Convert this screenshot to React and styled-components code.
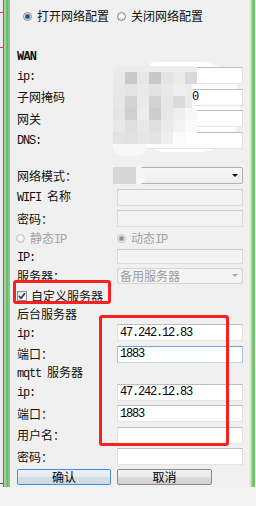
import React from "react";
import styled, { createGlobalStyle } from "styled-components";

const GlobalStyle = createGlobalStyle`
  html, body { margin: 0; padding: 0; }
  body {
    width: 256px;
    height: 506px;
    overflow: hidden;
    background: #f3f3f3;
    font-family: "Noto Sans CJK SC", "Liberation Sans", sans-serif;
    font-size: 12px;
    color: #111;
  }
  * { box-sizing: border-box; }
`;

const Page = styled.div`
  width: 256px;
  height: 506px;
  background: #f3f3f3;
`;

const Window = styled.div`
  position: relative;
  height: 487px;
  display: flex;
`;

const OuterStrip = styled.div`
  width: 4px;
  border-right: 1px solid #6e6e6e;
  background:
    linear-gradient(#e8322a, #e8322a) 0 12px / 3px 1px no-repeat,
    linear-gradient(#e8322a, #e8322a) 0 47px / 3px 1px no-repeat,
    linear-gradient(#5a5a5a, #5a5a5a) 0 483px / 3px 1px no-repeat,
    #ececec;
`;

const GreenBar = styled.div`
  width: ${(p) => p.$w}px;
  background: linear-gradient(to right, #b3dbac, #86cc7f 40%, #5fb559 75%, #9fd199);
`;

const Divider = styled.div`
  width: 1px;
  background: ${(p) => p.$c};
`;

const Panel = styled.div`
  flex: 1;
  background: #f0f0f0;
  padding: 7px 0 0 7px;
  display: flex;
  flex-direction: column;
`;

const Layer = styled.div`
  position: relative;
  z-index: 1;
`;

const Spacer = styled.div`
  height: ${(p) => p.$h}px;
`;

const FieldRow = styled(Layer)`
  height: ${(p) => p.$h ?? 21.5}px;
  display: grid;
  grid-template-columns: 100px 126px;
  align-items: center;
`;

const TopRadioRow = styled(Layer)`
  height: 18px;
  padding-left: 6px;
  display: grid;
  grid-template-columns: 94px auto;
  align-items: center;
`;

const TextRow = styled(Layer)`
  height: ${(p) => p.$h}px;
  display: flex;
  align-items: center;
  line-height: 14px;
  font-weight: ${(p) => (p.$bold ? 700 : 400)};
`;

const Label = styled.span`
  line-height: 14px;
  color: #111;
  white-space: nowrap;
`;

const Lat = styled.span`
  font-family: "Liberation Mono", monospace;
  letter-spacing: -1.2px;
  white-space: pre;
`;

const TitleLat = styled.span`
  font-family: "Liberation Mono", monospace;
  font-weight: 700;
  letter-spacing: -0.8px;
`;

const TextInput = styled.input`
  width: 126px;
  height: ${(p) => p.$h ?? 17}px;
  margin: 0;
  padding: 0 2px;
  border: 1px solid;
  border-color: ${(p) =>
    p.$focus
      ? "#6fa3d9 #a9caec #b9d6f3 #a9caec"
      : p.disabled
      ? "#cbcbcb #d9d9d9 #dddddd #d9d9d9"
      : "#bdbdbd #dedede #e5e5e5 #dedede"};
  background: ${(p) => (p.disabled ? "#f3f3f3" : "#fff")};
  font-family: "Liberation Mono", monospace;
  font-size: 12px;
  letter-spacing: -1.2px;
  color: #000;
  outline: none;
`;

const Combo = styled.div`
  width: 126px;
  height: ${(p) => p.$h}px;
  border: 1px solid ${(p) => (p.$disabled ? "#d5d5d5" : "#b2b2b2")};
  border-radius: 2px;
  background: ${(p) => (p.$disabled ? "#f4f4f4" : "linear-gradient(#f8f8f8, #eeeeee)")};
  display: flex;
  align-items: center;
  justify-content: space-between;
  padding: 0 4px 0 2px;
  color: ${(p) => (p.$disabled ? "#9d9d9d" : "#000")};
  line-height: 12px;
`;

const Caret = styled.span`
  width: 0;
  height: 0;
  border-left: 3px solid transparent;
  border-right: 3px solid transparent;
  border-top: 3px solid ${(p) => p.$c};
`;

const RadioItem = styled.span`
  display: flex;
  align-items: center;
  gap: ${(p) => p.$gap ?? 5}px;
  margin-left: ${(p) => p.$ml ?? 0}px;
  color: ${(p) => (p.$disabled ? "#a3a3a3" : "#111")};
  line-height: 14px;
  white-space: nowrap;
`;

const RadioDot = styled.span`
  width: 9px;
  height: 9px;
  flex: none;
  border-radius: 50%;
  border: 1px solid ${(p) => (p.$disabled ? "#c2c2c2" : "#8a8a8a")};
  background: ${(p) =>
    p.$checked
      ? `radial-gradient(circle at 50% 50%, ${p.$disabled ? "#8f8f8f" : "#21508f"} 0 1.5px, ${
          p.$disabled ? "#c4c4c4" : "#74a3d6"
        } 2.6px, #f6f6f6 3.2px)`
      : "radial-gradient(circle at 50% 40%, #ffffff 0 1px, #dedede 4px)"};
`;

const CheckBox = styled.span`
  width: 10px;
  height: 10px;
  flex: none;
  border: 1px solid #8e8f8f;
  background: linear-gradient(135deg, #dcdcdc, #ffffff);
  display: flex;
  align-items: center;
  justify-content: center;
`;

const ButtonRow = styled(Layer)`
  height: ${(p) => p.$h}px;
  display: grid;
  grid-template-columns: 100px 95px;
  align-items: start;
  padding-top: 1px;
`;

const Btn = styled.button`
  width: ${(p) => p.$w}px;
  height: 16px;
  margin: 0;
  padding: 0;
  border: 1px solid ${(p) => (p.$primary ? "#3f90d4" : "#8a8a8a")};
  border-radius: 2px;
  background: ${(p) =>
    p.$primary
      ? "linear-gradient(#eef3f8, #e3eaf1 50%, #d7e0e8 50%, #cfd9e3)"
      : "linear-gradient(#f3f3f3, #ebebeb 50%, #dddddd 50%, #d0d0d0)"};
  font-family: "Noto Sans CJK SC", sans-serif;
  font-size: 12px;
  line-height: 14px;
  color: #000;
`;

const Blob = styled.div`
  position: absolute;
  z-index: 0;
  left: ${(p) => p.$x}px;
  top: ${(p) => p.$y}px;
  width: ${(p) => p.$w}px;
  height: ${(p) => p.$h}px;
  background: ${(p) => p.$c};
  border-radius: ${(p) => p.$r};
`;

const Mosaic = styled.div`
  position: absolute;
  z-index: 3;
  left: ${(p) => p.$x}px;
  top: ${(p) => p.$y}px;
  display: grid;
  grid-template-columns: repeat(${(p) => p.$cols}, 12px);
  grid-auto-rows: ${(p) => p.$rh}px;
`;

const Cell = styled.span`
  background: ${(p) => p.$c || "transparent"};
`;

const Patch = styled(Blob)`
  z-index: 3;
`;

const RedBox = styled.div`
  position: absolute;
  z-index: 5;
  left: ${(p) => p.$x}px;
  top: ${(p) => p.$y}px;
  width: ${(p) => p.$w}px;
  height: ${(p) => p.$h}px;
  border: 3px solid #fb1f1f;
  border-radius: 3px;
`;

const MOSAIC = [
  ["#e9e9e9", "#c9c9c9", "#e7e7e7", "#c8c8c8", "#e4e4e4", "#edebe5", "#d6dadf"],
  ["#e8e8e8", "#e4e4e4", "#e9e9e9", "#e3e3e3", "#e9e9e9", "#eeeeee", null],
  ["#e7e7e7", "#d3d3d3", "#eaeaea", "#d2d2d2", "#e6e6e6", "#dadada", null],
  ["#e5e5e5", "#cfcfcf", "#ededed", "#cdcdcd", "#e7e7e7", "#efefef", "#f7f7f7"],
  ["#e8e8e8", "#dedede", "#e8e8e8", "#dfdfdf", "#ebebeb", "#f3f3f3", "#fafafa"],
  ["#e3e3e3", "#e1e1e1", "#e6e6e6", "#e3e3e3", "#eeeeee", "#fbfbfb", "#ffffff"],
];

function Radio({ label, checked, disabled, ml, gap }) {
  return (
    <RadioItem $disabled={disabled} $ml={ml} $gap={gap}>
      <RadioDot $checked={checked} $disabled={disabled} />
      {label}
    </RadioItem>
  );
}

function Field({ label, value, focus, disabled, h, ih }) {
  return (
    <FieldRow $h={h}>
      <Label>{label}</Label>
      <TextInput readOnly value={value ?? ""} $focus={focus} disabled={disabled} $h={ih} />
    </FieldRow>
  );
}

export default function App() {
  return (
    <Page>
      <GlobalStyle />
      <Window>
        <OuterStrip />
        <GreenBar $w={5} />
        <Divider $c="#a9b0a8" />
        <Panel>
          <TopRadioRow>
            <Radio label="打开网络配置" checked />
            <Radio label="关闭网络配置" />
          </TopRadioRow>
          <Spacer $h={24} />
          <TextRow $h={16} $bold>
            <TitleLat>WAN</TitleLat>
          </TextRow>
          <Field label={<Lat>ip:</Lat>} />
          <Field label="子网掩码" value="255.255.255.0" />
          <Field label="网关" />
          <Field label={<Lat>DNS:</Lat>} />
          <Spacer $h={14} />
          <FieldRow>
            <Label>网络模式：</Label>
            <Combo $h={17}>
              <span />
              <Caret $c="#111" />
            </Combo>
          </FieldRow>
          <Field
            label={
              <>
                <Lat>WIFI </Lat>名称
              </>
            }
            disabled
          />
          <Field label="密码：" disabled />
          <FieldRow $h={18}>
            <Radio
              label={
                <span>
                  静态<Lat>IP</Lat>
                </span>
              }
              disabled
              ml={-1}
            />
            <Radio
              label={
                <span>
                  动态<Lat>IP</Lat>
                </span>
              }
              disabled
              checked
            />
          </FieldRow>
          <Field label={<Lat>IP:</Lat>} disabled h={18} ih={15} />
          <FieldRow $h={20.5}>
            <Label>服务器：</Label>
            <Combo $h={16} $disabled>
              <span>备用服务器</span>
              <Caret $c="#a8a8a8" />
            </Combo>
          </FieldRow>
          <TextRow $h={20}>
            <RadioItem $gap={4}>
              <CheckBox>
                <svg width="8" height="8" viewBox="0 0 8 8">
                  <path d="M1 4 L3 6.2 L7 1.2" fill="none" stroke="#25346b" strokeWidth="1.6" />
                </svg>
              </CheckBox>
              自定义服务器
            </RadioItem>
          </TextRow>
          <TextRow $h={16}>后台服务器</TextRow>
          <Field label={<Lat>ip:</Lat>} value="47.242.12.83" />
          <Field label="端口：" value="1883" focus />
          <TextRow $h={16.5}>
            <Label>
              <Lat>{"mqtt "}</Lat>服务器
            </Label>
          </TextRow>
          <Field label={<Lat>ip:</Lat>} value="47.242.12.83" />
          <Field label="端口：" value="1883" />
          <Field label="用户名：" />
          <Field label="密码：" />
          <ButtonRow $h={19.5}>
            <Btn $primary $w={94}>确认</Btn>
            <Btn $w={95}>取消</Btn>
          </ButtonRow>
        </Panel>
        <Divider $c="#cfe6cb" />
        <GreenBar $w={4} />
        <Divider $c="#f7f7f7" />

        <Blob $x={150} $y={62} $w={90} $h={90} $c="#ffffff" $r="4px 40px 40px 14px" />
        <Mosaic $x={113} $y={72} $cols={7} $rh={12}>
          {MOSAIC.flatMap((row, r) => row.map((c, i) => <Cell key={`${r}-${i}`} $c={c} />))}
        </Mosaic>
        <Patch $x={185} $y={84} $w={7} $h={24} $c="#ebebeb" $r="0" />
        <Patch $x={113} $y={66} $w={84} $h={6} $c="#ededed" $r="3px 3px 0 0" />
        <Patch $x={113} $y={144} $w={34} $h={12} $c="#f8f8f8" $r="0 0 10px 10px" />
        <Patch $x={113} $y={167} $w={24} $h={17} $c="#d7d7d7" $r="0" />
        <Patch $x={136} $y={166} $w={10} $h={19} $c="#f6f6f6" $r="0 9px 9px 0" />

        <RedBox $x={13} $y={280} $w={98} $h={24} />
        <RedBox $x={99} $y={315} $w={130} $h={131} />
      </Window>
    </Page>
  );
}
